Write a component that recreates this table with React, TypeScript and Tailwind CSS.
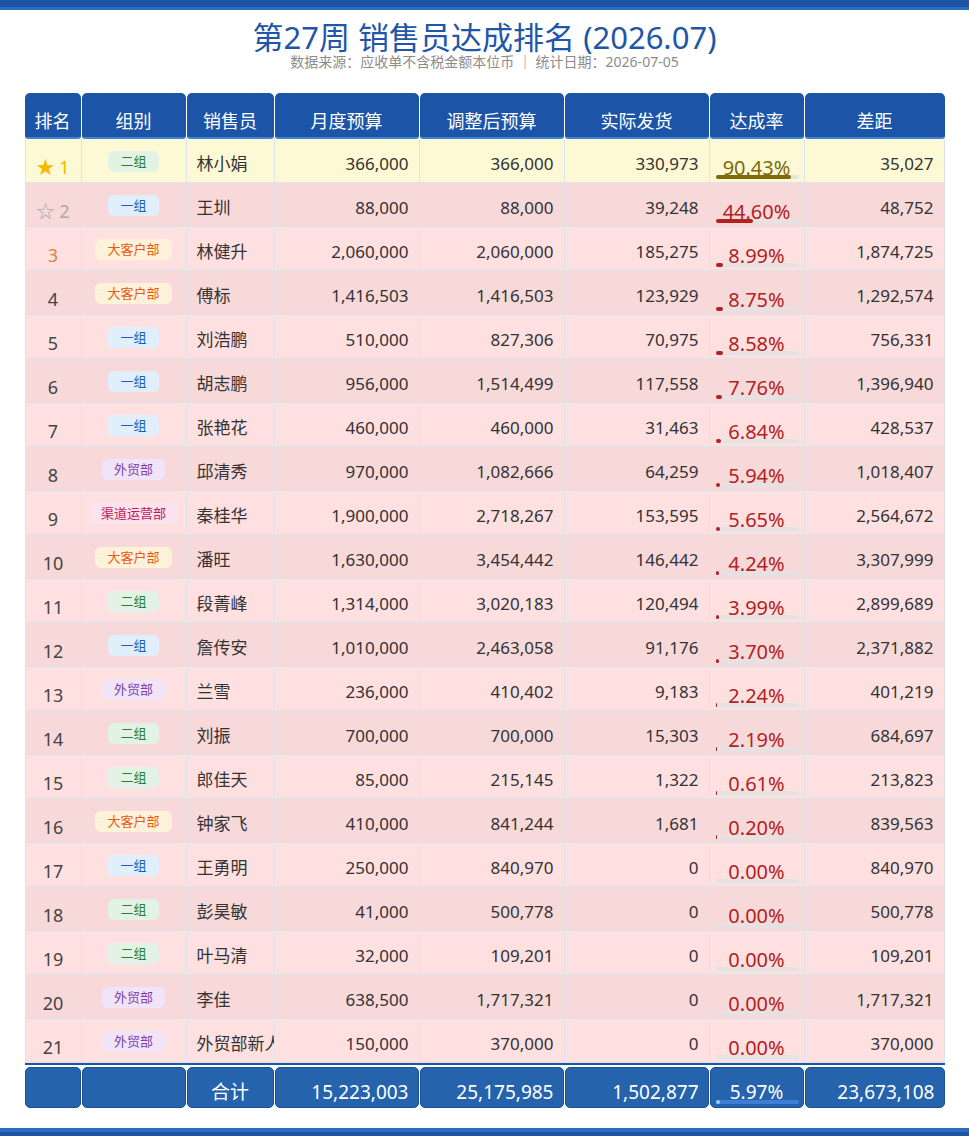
type Row = {
  group: string;
  name: string;
  budget: string;
  adjusted: string;
  shipped: string;
  rate: number;
  gap: string;
};

const rows: Row[] = [
  { group: '二组', name: '林小娟', budget: '366,000', adjusted: '366,000', shipped: '330,973', rate: 90.43, gap: '35,027' },
  { group: '一组', name: '王圳', budget: '88,000', adjusted: '88,000', shipped: '39,248', rate: 44.6, gap: '48,752' },
  { group: '大客户部', name: '林健升', budget: '2,060,000', adjusted: '2,060,000', shipped: '185,275', rate: 8.99, gap: '1,874,725' },
  { group: '大客户部', name: '傅标', budget: '1,416,503', adjusted: '1,416,503', shipped: '123,929', rate: 8.75, gap: '1,292,574' },
  { group: '一组', name: '刘浩鹏', budget: '510,000', adjusted: '827,306', shipped: '70,975', rate: 8.58, gap: '756,331' },
  { group: '一组', name: '胡志鹏', budget: '956,000', adjusted: '1,514,499', shipped: '117,558', rate: 7.76, gap: '1,396,940' },
  { group: '一组', name: '张艳花', budget: '460,000', adjusted: '460,000', shipped: '31,463', rate: 6.84, gap: '428,537' },
  { group: '外贸部', name: '邱清秀', budget: '970,000', adjusted: '1,082,666', shipped: '64,259', rate: 5.94, gap: '1,018,407' },
  { group: '渠道运营部', name: '秦桂华', budget: '1,900,000', adjusted: '2,718,267', shipped: '153,595', rate: 5.65, gap: '2,564,672' },
  { group: '大客户部', name: '潘旺', budget: '1,630,000', adjusted: '3,454,442', shipped: '146,442', rate: 4.24, gap: '3,307,999' },
  { group: '二组', name: '段菁峰', budget: '1,314,000', adjusted: '3,020,183', shipped: '120,494', rate: 3.99, gap: '2,899,689' },
  { group: '一组', name: '詹传安', budget: '1,010,000', adjusted: '2,463,058', shipped: '91,176', rate: 3.7, gap: '2,371,882' },
  { group: '外贸部', name: '兰雪', budget: '236,000', adjusted: '410,402', shipped: '9,183', rate: 2.24, gap: '401,219' },
  { group: '二组', name: '刘振', budget: '700,000', adjusted: '700,000', shipped: '15,303', rate: 2.19, gap: '684,697' },
  { group: '二组', name: '郎佳天', budget: '85,000', adjusted: '215,145', shipped: '1,322', rate: 0.61, gap: '213,823' },
  { group: '大客户部', name: '钟家飞', budget: '410,000', adjusted: '841,244', shipped: '1,681', rate: 0.2, gap: '839,563' },
  { group: '一组', name: '王勇明', budget: '250,000', adjusted: '840,970', shipped: '0', rate: 0, gap: '840,970' },
  { group: '二组', name: '彭昊敏', budget: '41,000', adjusted: '500,778', shipped: '0', rate: 0, gap: '500,778' },
  { group: '二组', name: '叶马清', budget: '32,000', adjusted: '109,201', shipped: '0', rate: 0, gap: '109,201' },
  { group: '外贸部', name: '李佳', budget: '638,500', adjusted: '1,717,321', shipped: '0', rate: 0, gap: '1,717,321' },
  { group: '外贸部', name: '外贸部新人', budget: '150,000', adjusted: '370,000', shipped: '0', rate: 0, gap: '370,000' },
];

const groupStyles: Record<string, string> = {
  '二组': 'bg-[#e2f3e5] text-[#2e7d32]',
  '一组': 'bg-[#e1effc] text-[#1b5fb5]',
  '大客户部': 'bg-[#fff2da] text-[#e8590c]',
  '外贸部': 'bg-[#f1e4f8] text-[#7e3fa8]',
  '渠道运营部': 'bg-[#fbe3ee] text-[#c2185b]',
};

const cols = 'grid grid-cols-[57px_105px_88px_145px_145px_145px_95px_140px]';
const headers = ['排名', '组别', '销售员', '月度预算', '调整后预算', '实际发货', '达成率', '差距'];

function Rank({ i }: { i: number }) {
  if (i === 0) return <span className="text-[#f5b800]">★ 1</span>;
  if (i === 1) return <span className="text-[#aaaaaa]">☆ 2</span>;
  if (i === 2) return <span className="text-[#d4843a]">3</span>;
  return <span className="text-[#444]">{i + 1}</span>;
}

export default function App() {
  return (
    <div className="min-h-screen flex flex-col bg-white font-['Noto_Sans','Noto_Sans_CJK_SC',sans-serif]">
      {/* top bar */}
      <div className="h-[10px] bg-[#1c53a5] border-b-[3px] border-[#2b6cc2]" />

      <div className="flex-1">
        <h1 className="mt-[11px] text-center text-[31px] leading-[32px] text-[#1f56a8]">
          第27周 销售员达成排名 (2026.07)
        </h1>
        <p className="text-center text-[14px] leading-[18px] text-[#8c8c8c]">
          数据来源：应收单不含税金额本位币 ｜ 统计日期：2026-07-05
        </p>

        <div className="mx-auto mt-[22px] w-[920px]">
          {/* header */}
          <div className={cols}>
            {headers.map((h, i) => (
              <div key={h} className={i < headers.length - 1 ? 'pr-px' : ''}>
                <div className="h-[46px] flex items-center justify-center pt-[12px] rounded-t-[5px] rounded-b-[3px] bg-[#1c55a8] border-b-2 border-[#3f84d8] text-[18px] text-white">
                  {h}
                </div>
              </div>
            ))}
          </div>

          {/* body */}
          <div className="border-b-2 border-[#1c55a8]">
            {rows.map((r, i) => {
              const bg = i === 0 ? 'bg-[#fdf9d5]' : i % 2 === 0 ? 'bg-[#fee0e1]' : 'bg-[#f8d9da]';
              const rateColor = i === 0 ? 'text-[#7b6b0c]' : 'text-[#b22222]';
              const fillColor = i === 0 ? 'bg-[#7b6b0c]' : 'bg-[#b22222]';
              const cell = 'h-[44px] border-r border-b border-[#dce3e9] flex items-center';
              return (
                <div key={r.name} className={`${cols} ${bg} text-[17px] text-[#333]`}>
                  <div className={`${cell} border-l justify-center pt-[14px] text-[18px]`}>
                    <Rank i={i} />
                  </div>
                  <div className={`${cell} justify-center pt-[2px]`}>
                    <span className={`h-[21px] px-3 rounded-md flex items-center text-[13px] ${groupStyles[r.group]}`}>
                      {r.group}
                    </span>
                  </div>
                  <div className={`${cell} pt-[7px] pl-[10px] overflow-hidden whitespace-nowrap`}>{r.name}</div>
                  <div className={`${cell} pt-[7px] pr-[10px] justify-end`}>{r.budget}</div>
                  <div className={`${cell} pt-[7px] pr-[10px] justify-end`}>{r.adjusted}</div>
                  <div className={`${cell} pt-[7px] pr-[10px] justify-end`}>{r.shipped}</div>
                  <div className={`${cell} relative justify-center pt-[14px]`}>
                    <span className={`text-[20px] ${rateColor}`}>{r.rate.toFixed(2)}%</span>
                    <div className="absolute left-[6px] right-[5px] bottom-[3px] h-[4px] rounded-full bg-[#e3e3e3]">
                      <div className={`h-full rounded-full ${fillColor}`} style={{ width: `${r.rate}%` }} />
                    </div>
                  </div>
                  <div className={`${cell} pt-[7px] pr-[10px] justify-end`}>{r.gap}</div>
                </div>
              );
            })}
          </div>

          {/* totals */}
          <div className={`${cols} mt-[2px] text-[19px] text-white`}>
            {['', '', '合计', '15,223,003', '25,175,985', '1,502,877', '5.97%', '23,673,108'].map((v, i) => (
              <div key={i} className={i < 7 ? 'pr-px' : ''}>
                <div
                  className={`relative h-[41px] flex items-center pt-[10px] rounded-[5px] bg-[#2563ad] border border-[#1d4f98] ${
                    i <= 2 || i === 6 ? 'justify-center' : 'justify-end pr-[9px]'
                  }`}
                >
                  {v}
                  {i === 6 && (
                    <div className="absolute left-[5px] right-[4px] bottom-[3px] h-[4px] rounded-full bg-[#3d80d3]">
                      <div className="h-full rounded-full bg-[#9ccaf2]" style={{ width: '5.97%' }} />
                    </div>
                  )}
                </div>
              </div>
            ))}
          </div>
        </div>
      </div>

      {/* bottom bar */}
      <div className="mt-[20px] h-[10px] bg-[#1c53a5] border-t-[4px] border-[#2b6cc2]" />
    </div>
  );
}
